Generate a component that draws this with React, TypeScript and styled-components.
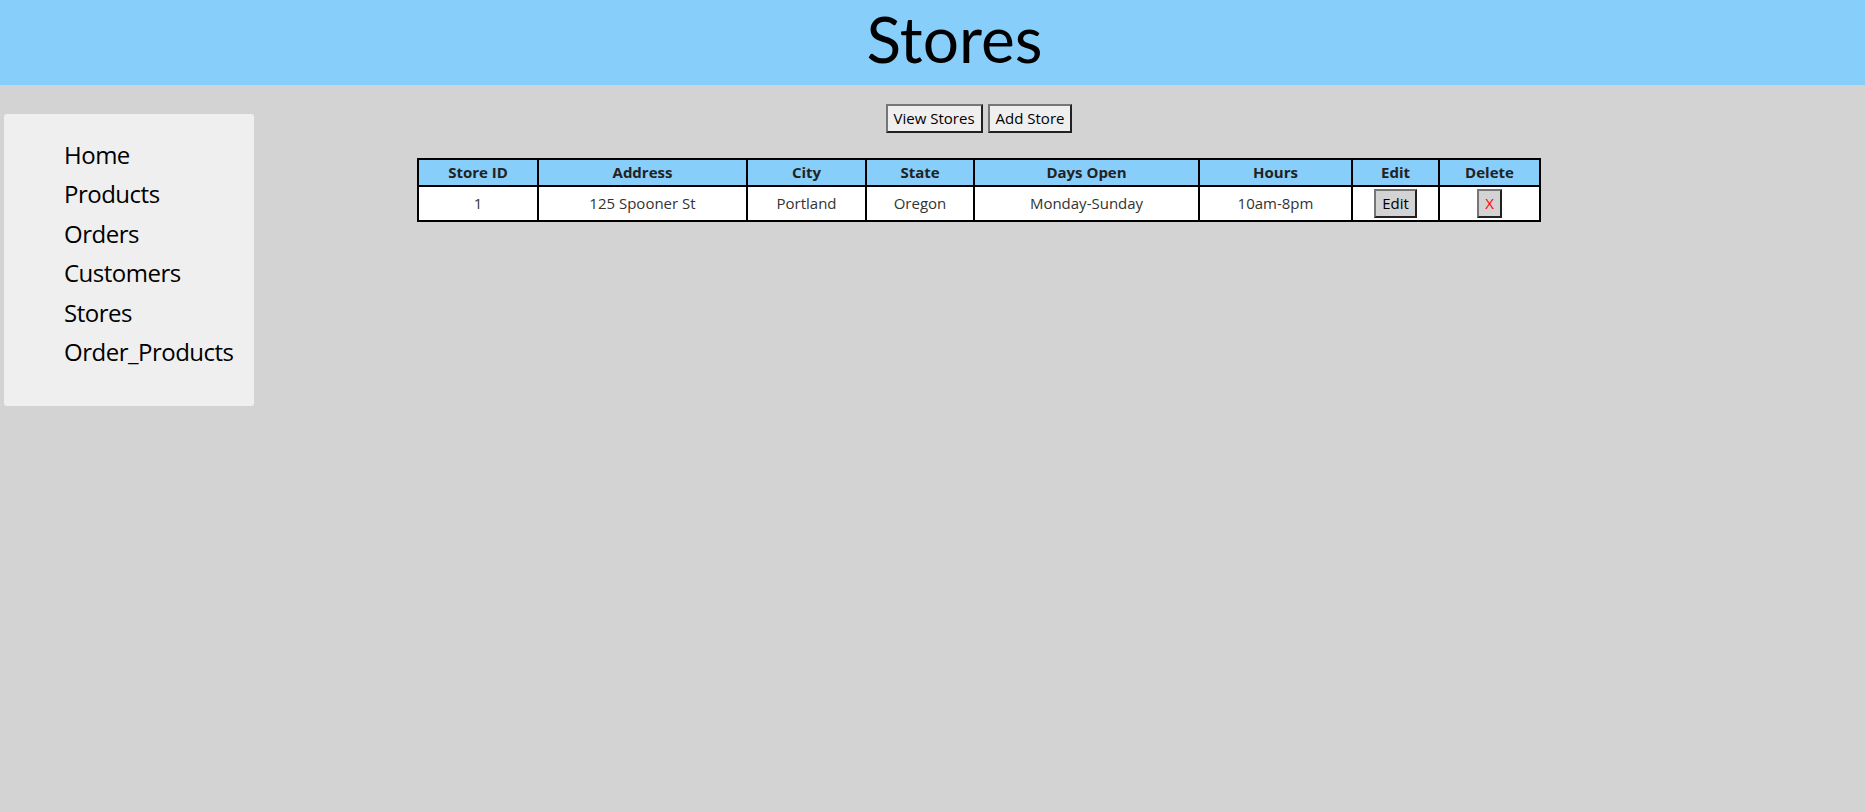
import React from "react";
import styled, { createGlobalStyle } from "styled-components";

const GlobalStyle = createGlobalStyle`
  html, body {
    margin: 0;
    padding: 0;
    background: #d3d3d3;
    font-family: "Open Sans", "Noto Sans", sans-serif;
  }
`;

const Page = styled.div`
  min-height: 812px;
  background: #d3d3d3;
`;

const Header = styled.header`
  height: 85px;
  box-sizing: border-box;
  padding-left: 44px;
  background: #87cefa;
  text-align: center;
`;

const Title = styled.h1`
  margin: 0;
  font-family: Lato, "Open Sans", sans-serif;
  font-size: 64px;
  line-height: 78px;
  font-weight: 400;
  color: #000;
`;

const Body = styled.div`
  display: flex;
  align-items: flex-start;
`;

const Sidebar = styled.nav`
  width: 250px;
  margin: 29px 0 0 4px;
  box-sizing: border-box;
  padding: 21px 0 35px 60px;
  background: #efefef;
  border-radius: 3px;
`;

const NavList = styled.ul`
  list-style: none;
  margin: 0;
  padding: 0;
`;

const NavItem = styled.li`
  font-size: 24px;
  line-height: 39.4px;
  letter-spacing: -0.5px;
  font-weight: 500;
  color: #000;
`;

const Main = styled.main`
  flex: 1;
  padding: 19px 161px 0 0;
  display: flex;
  flex-direction: column;
  align-items: center;
`;

const ButtonRow = styled.div`
  display: flex;
  gap: 5px;
`;

const Button = styled.button<{ $bg?: string; $color?: string }>`
  font-family: "Open Sans", "Noto Sans", sans-serif;
  font-size: 15px;
  line-height: 21px;
  padding: 2px 6px;
  border: 2px outset #767676;
  background: ${(p) => p.$bg || "#efefef"};
  color: ${(p) => p.$color || "#000"};
  cursor: pointer;
`;

const Table = styled.table`
  margin-top: 25px;
  width: 1122px;
  table-layout: fixed;
  border-collapse: collapse;
  border: 2px solid #000;
`;

const Th = styled.th`
  background: #87cefa;
  border: 2px solid #000;
  padding: 2px 4px;
  font-size: 15px;
  line-height: 21px;
  font-weight: 700;
  color: #222;
  text-align: center;
`;

const Td = styled.td`
  background: #fff;
  border: 2px solid #000;
  padding: 2px 4px;
  font-size: 15px;
  line-height: 21px;
  color: #333;
  text-align: center;
`;

const columns = [
  { label: "Store ID", width: 120 },
  { label: "Address", width: 209 },
  { label: "City", width: 119 },
  { label: "State", width: 108 },
  { label: "Days Open", width: 225 },
  { label: "Hours", width: 153 },
  { label: "Edit", width: 87 },
  { label: "Delete", width: 101 },
];

const stores = [
  {
    id: 1,
    address: "125 Spooner St",
    city: "Portland",
    state: "Oregon",
    days: "Monday-Sunday",
    hours: "10am-8pm",
  },
];

const navItems = ["Home", "Products", "Orders", "Customers", "Stores", "Order_Products"];

export default function App() {
  return (
    <Page>
      <GlobalStyle />
      <Header>
        <Title>Stores</Title>
      </Header>
      <Body>
        <Sidebar>
          <NavList>
            {navItems.map((n) => (
              <NavItem key={n}>{n}</NavItem>
            ))}
          </NavList>
        </Sidebar>
        <Main>
          <ButtonRow>
            <Button>View Stores</Button>
            <Button>Add Store</Button>
          </ButtonRow>
          <Table>
            <colgroup>
              {columns.map((c) => (
                <col key={c.label} style={{ width: c.width }} />
              ))}
            </colgroup>
            <thead>
              <tr>
                {columns.map((c) => (
                  <Th key={c.label}>{c.label}</Th>
                ))}
              </tr>
            </thead>
            <tbody>
              {stores.map((s) => (
                <tr key={s.id}>
                  <Td>{s.id}</Td>
                  <Td>{s.address}</Td>
                  <Td>{s.city}</Td>
                  <Td>{s.state}</Td>
                  <Td>{s.days}</Td>
                  <Td>{s.hours}</Td>
                  <Td>
                    <Button $bg="#d3d3d3">Edit</Button>
                  </Td>
                  <Td>
                    <Button $bg="#d3d3d3" $color="#ff0000">X</Button>
                  </Td>
                </tr>
              ))}
            </tbody>
          </Table>
        </Main>
      </Body>
    </Page>
  );
}
